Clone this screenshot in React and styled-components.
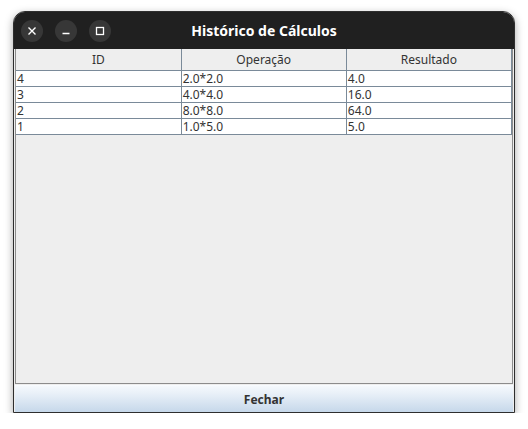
import React from "react";
import styled, { createGlobalStyle } from "styled-components";

const GlobalStyle = createGlobalStyle`
  html, body {
    margin: 0;
    padding: 0;
    background: #ffffff;
  }
  body {
    font-family: "Noto Sans", "DejaVu Sans", sans-serif;
  }
`;

const Page = styled.div`
  padding: 11px 0 0 13px;
`;

const Window = styled.div`
  display: flex;
  flex-direction: column;
  width: 502px;
  height: 402px;
  box-sizing: border-box;
  border: 1px solid #2e2e2e;
  border-radius: 12px 12px 0 0;
  background: #eeeeee;
  box-shadow: 0 3px 8px rgba(0, 0, 0, 0.35);
  overflow: hidden;
`;

const TitleBar = styled.div`
  position: relative;
  display: flex;
  align-items: center;
  gap: 12px;
  height: 37px;
  padding: 0 0 0 7px;
  background: #202020;
  flex-shrink: 0;
`;

const Title = styled.div`
  position: absolute;
  left: 0;
  right: 0;
  text-align: center;
  color: #ffffff;
  font-weight: bold;
  font-size: 14px;
  pointer-events: none;
`;

const RoundButton = styled.div`
  width: 22px;
  height: 22px;
  border-radius: 50%;
  background: #373737;
  display: flex;
  align-items: center;
  justify-content: center;
  color: #ffffff;
`;

const Body = styled.div`
  flex: 1;
  display: flex;
  flex-direction: column;
  padding: 0 1px;
  min-height: 0;
`;

const ScrollPane = styled.div`
  flex: 1;
  border: 1px solid #8c8c8c;
  border-top: none;
  background: #eeeeee;
`;

const Table = styled.table`
  width: 100%;
  border-collapse: collapse;
  table-layout: fixed;
  font-size: 12px;
  color: #333333;
`;

const HeadCell = styled.th`
  height: 21px;
  padding: 0;
  font-weight: normal;
  text-align: center;
  background: #eeeeee;
  border: 1px solid #7a8a99;
  border-top: none;
  &:first-child { border-left: none; }
`;

const Cell = styled.td`
  height: 15px;
  padding: 0 0 0 1px;
  line-height: 15px;
  text-align: left;
  background: #ffffff;
  border: 1px solid #7a8a99;
  white-space: nowrap;
  &:first-child { border-left: none; }
`;

const CloseButton = styled.button`
  height: 27px;
  flex-shrink: 0;
  margin-top: 1px;
  border: none;
  border-top: 1px solid #f8fbff;
  background: linear-gradient(to bottom, #f5f9fd 0%, #e6eef7 35%, #c6d8ea 100%);
  font-family: "Noto Sans", "DejaVu Sans", sans-serif;
  font-weight: bold;
  font-size: 12px;
  color: #333333;
  padding: 0;
`;

const rows = [
  { id: 4, op: "2.0*2.0", res: "4.0" },
  { id: 3, op: "4.0*4.0", res: "16.0" },
  { id: 2, op: "8.0*8.0", res: "64.0" },
  { id: 1, op: "1.0*5.0", res: "5.0" },
];

export default function App() {
  return (
    <Page>
      <GlobalStyle />
      <Window>
        <TitleBar>
          <Title>Histórico de Cálculos</Title>
          <RoundButton>
            <svg width="10" height="10" viewBox="0 0 10 10">
              <path d="M1.5 1.5 L8.5 8.5 M8.5 1.5 L1.5 8.5" stroke="#fff" strokeWidth="1.4" />
            </svg>
          </RoundButton>
          <RoundButton>
            <svg width="10" height="10" viewBox="0 0 10 10">
              <path d="M1.5 7.5 L8.5 7.5" stroke="#fff" strokeWidth="1.4" />
            </svg>
          </RoundButton>
          <RoundButton>
            <svg width="10" height="10" viewBox="0 0 10 10">
              <rect x="1.5" y="1.5" width="7" height="7" fill="none" stroke="#fff" strokeWidth="1.3" />
            </svg>
          </RoundButton>
        </TitleBar>
        <Body>
          <ScrollPane>
            <Table>
              <thead>
                <tr>
                  <HeadCell>ID</HeadCell>
                  <HeadCell>Operação</HeadCell>
                  <HeadCell>Resultado</HeadCell>
                </tr>
              </thead>
              <tbody>
                {rows.map((r) => (
                  <tr key={r.id}>
                    <Cell>{r.id}</Cell>
                    <Cell>{r.op}</Cell>
                    <Cell>{r.res}</Cell>
                  </tr>
                ))}
              </tbody>
            </Table>
          </ScrollPane>
          <CloseButton>Fechar</CloseButton>
        </Body>
      </Window>
    </Page>
  );
}
